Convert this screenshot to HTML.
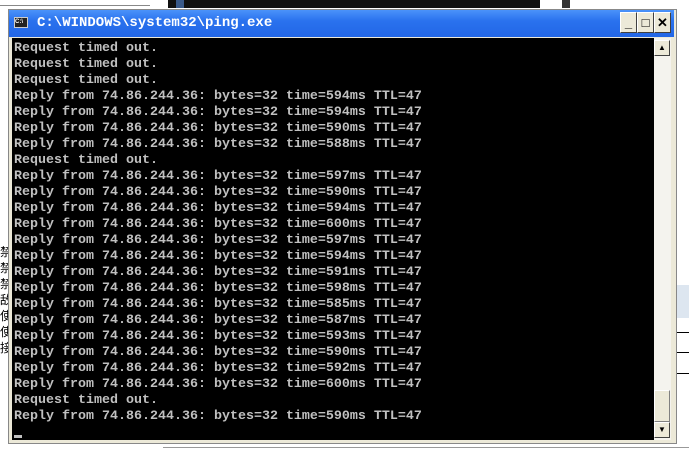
<!DOCTYPE html>
<html><head><meta charset="utf-8"><style>
body{margin:0;width:689px;height:457px;overflow:hidden;background:#fff;position:relative;font-family:"Liberation Sans",sans-serif}
.a{position:absolute}
pre{margin:0;font-family:"Liberation Mono",monospace;font-size:13.33px;line-height:16px;color:#c0c0c0;font-weight:bold}
.btn{position:absolute;top:12px;width:17px;height:21px;background:#ece9d8;border:1px solid;border-color:#fff #404040 #404040 #fff;box-sizing:border-box;font:bold 13px "Liberation Sans",sans-serif;text-align:center;line-height:19px;color:#000}
</style></head><body>
<div class="a" style="left:168px;top:0;width:372px;height:8px;background:#111"></div>
<div class="a" style="left:176px;top:0;width:8px;height:8px;background:#3a5a8a"></div>
<div class="a" style="left:562px;top:0;width:8px;height:8px;background:#333"></div>
<div class="a" style="left:0;top:5px;width:150px;height:1px;background:#888"></div>
<div class="a" style="left:0;top:244px;width:9px;height:140px;font:12px 'Noto Sans CJK SC',sans-serif;line-height:16px;color:#000;overflow:hidden">禁<br>禁<br>禁<br>敌<br>使<br>使<br>接</div>
<div class="a" style="left:677px;top:285px;width:12px;height:33px;background:#dde6f0"></div>
<div class="a" style="left:677px;top:332px;width:12px;height:1px;background:#000"></div>
<div class="a" style="left:677px;top:352px;width:12px;height:1px;background:#000"></div>
<div class="a" style="left:677px;top:373px;width:12px;height:1px;background:#000"></div>
<div class="a" style="left:163px;top:447px;width:526px;height:1px;background:#999"></div>
<div class="a" style="left:8px;top:9px;width:669px;height:435px;background:#ece9d8;border:1px solid #888;box-sizing:border-box"></div>
<div class="a" style="left:9px;top:10px;width:665px;height:27px;background:linear-gradient(#4a92fa,#2a72ee 40%,#2266e6)"></div>
<div class="a" style="left:14px;top:17px;width:14px;height:11px;background:#222;border:1px solid #ccc;box-sizing:border-box;color:#fff;font:bold 6px sans-serif;line-height:9px">C:\</div>
<div class="a" style="left:37px;top:14px;color:#fff;font:bold 14px 'Liberation Mono',monospace;line-height:18px">C:\WINDOWS\system32\ping.exe</div>
<div class="btn" style="left:620px">_</div>
<div class="btn" style="left:637px">□</div>
<div class="btn" style="left:654px">✕</div>
<div class="a" style="left:12px;top:38px;width:642px;height:402px;background:#000"></div>
<div class="a" style="left:654px;top:38px;width:17px;height:402px;background:#f4f3ee"></div>
<div class="btn" style="left:654px;top:40px;width:16px;height:16px;font-size:8px;line-height:14px">▲</div>
<div class="a" style="left:654px;top:390px;width:16px;height:32px;background:#ece9d8;border:1px solid;border-color:#fff #808080 #808080 #fff;box-sizing:border-box"></div>
<div class="btn" style="left:654px;top:422px;width:16px;height:16px;font-size:8px;line-height:14px">▼</div>
<div class="a" style="left:14px;top:41px"><pre>Request timed out.
Request timed out.
Request timed out.
Reply from 74.86.244.36: bytes=32 time=594ms TTL=47
Reply from 74.86.244.36: bytes=32 time=594ms TTL=47
Reply from 74.86.244.36: bytes=32 time=590ms TTL=47
Reply from 74.86.244.36: bytes=32 time=588ms TTL=47
Request timed out.
Reply from 74.86.244.36: bytes=32 time=597ms TTL=47
Reply from 74.86.244.36: bytes=32 time=590ms TTL=47
Reply from 74.86.244.36: bytes=32 time=594ms TTL=47
Reply from 74.86.244.36: bytes=32 time=600ms TTL=47
Reply from 74.86.244.36: bytes=32 time=597ms TTL=47
Reply from 74.86.244.36: bytes=32 time=594ms TTL=47
Reply from 74.86.244.36: bytes=32 time=591ms TTL=47
Reply from 74.86.244.36: bytes=32 time=598ms TTL=47
Reply from 74.86.244.36: bytes=32 time=585ms TTL=47
Reply from 74.86.244.36: bytes=32 time=587ms TTL=47
Reply from 74.86.244.36: bytes=32 time=593ms TTL=47
Reply from 74.86.244.36: bytes=32 time=590ms TTL=47
Reply from 74.86.244.36: bytes=32 time=592ms TTL=47
Reply from 74.86.244.36: bytes=32 time=600ms TTL=47
Request timed out.
Reply from 74.86.244.36: bytes=32 time=590ms TTL=47</pre></div>
<div class="a" style="left:14px;top:435px;width:8px;height:3px;background:#c0c0c0"></div>
</body></html>
